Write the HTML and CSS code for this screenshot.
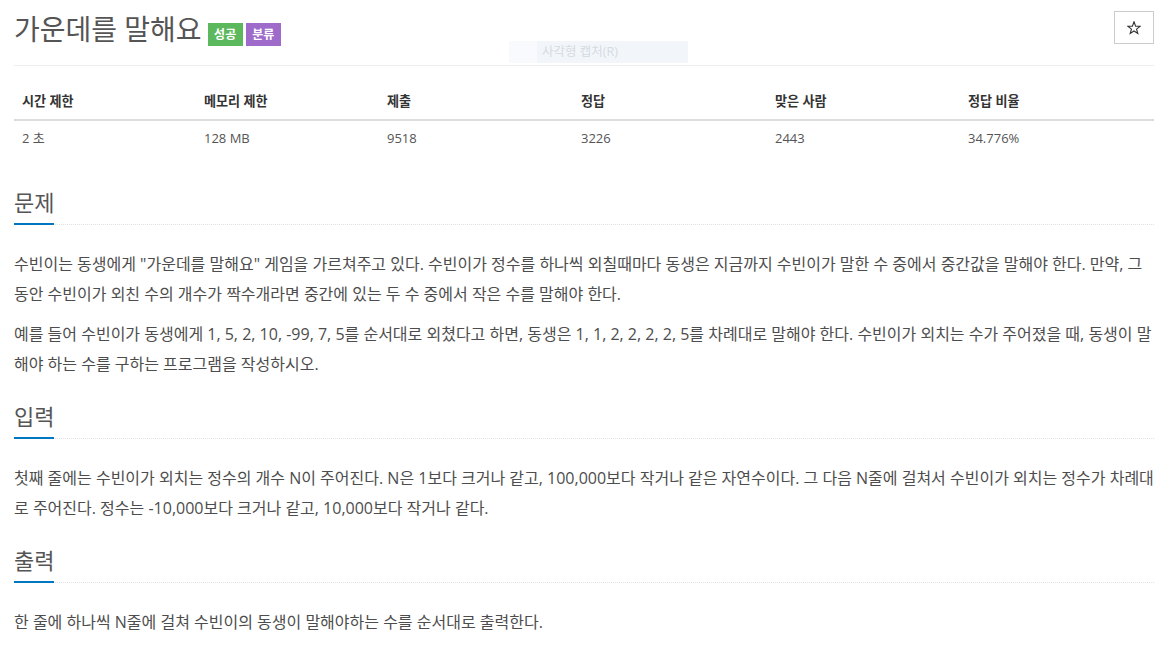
FILE: index.html
```html
<!DOCTYPE html>
<html lang="ko">
<head>
<meta charset="utf-8">
<title>가운데를 말해요</title>
<link rel="stylesheet" href="styles.css">
</head>
<body>
<div class="page">
  <header class="page-header">
    <div class="title-row">
      <h1 class="title">가운데를 말해요</h1>
      <span class="label label-success">성공</span>
      <span class="label label-purple">분류</span>
    </div>
    <button class="star-btn" type="button" aria-label="즐겨찾기">
      <svg width="14" height="14" viewBox="0 0 14 14" aria-hidden="true"><polygon points="7,0.8 8.59,5.12 13.18,5.29 9.57,8.13 10.82,12.56 7,10 3.18,12.56 4.43,8.13 0.82,5.29 5.41,5.12" fill="none" stroke="#333" stroke-width="1.1" stroke-linejoin="miter"/></svg>
    </button>
  </header>

  <table class="info">
    <colgroup>
      <col class="c1"><col class="c2"><col class="c3"><col class="c4"><col class="c5"><col class="c6">
    </colgroup>
    <thead>
      <tr><th>시간 제한</th><th>메모리 제한</th><th>제출</th><th>정답</th><th>맞은 사람</th><th>정답 비율</th></tr>
    </thead>
    <tbody>
      <tr><td>2 초</td><td>128 MB</td><td>9518</td><td>3226</td><td>2443</td><td>34.776%</td></tr>
    </tbody>
  </table>

  <section class="section section-first">
    <div class="headline"><h2>문제</h2></div>
    <div class="problem-text">
      <p>수빈이는 동생에게 "가운데를 말해요" 게임을 가르쳐주고 있다. 수빈이가 정수를 하나씩 외칠때마다 동생은 지금까지 수빈이가 말한 수 중에서 중간값을 말해야 한다. 만약, 그 동안 수빈이가 외친 수의 개수가 짝수개라면 중간에 있는 두 수 중에서 작은 수를 말해야 한다.</p>
      <p>예를 들어 수빈이가 동생에게 1, 5, 2, 10, -99, 7, 5를 순서대로 외쳤다고 하면, 동생은 1, 1, 2, 2, 2, 2, 5를 차례대로 말해야 한다. 수빈이가 외치는 수가 주어졌을 때, 동생이 말해야 하는 수를 구하는 프로그램을 작성하시오.</p>
    </div>
  </section>

  <section class="section">
    <div class="headline"><h2>입력</h2></div>
    <div class="problem-text">
      <p>첫째 줄에는 수빈이가 외치는 정수의 개수 N이 주어진다. N은 1보다 크거나 같고, 100,000보다 작거나 같은 자연수이다. 그 다음 N줄에 걸쳐서 수빈이가 외치는 정수가 차례대로 주어진다. 정수는 -10,000보다 크거나 같고, 10,000보다 작거나 같다.</p>
    </div>
  </section>

  <section class="section">
    <div class="headline"><h2>출력</h2></div>
    <div class="problem-text">
      <p>한 줄에 하나씩 N줄에 걸쳐 수빈이의 동생이 말해야하는 수를 순서대로 출력한다.</p>
    </div>
  </section>
</div>
<div class="capture-tip">사각형 캡처(R)</div>
</body>
</html>
```

FILE: styles.css
```css
html, body {
  margin: 0;
  padding: 0;
  background: #fff;
}

body {
  font-family: "Open Sans", "Noto Sans CJK KR", sans-serif;
  color: #555;
}

.page {
  width: 1140px;
  padding: 0 15px 0 14px;
}

/* header */
.page-header {
  display: flex;
  justify-content: space-between;
  align-items: flex-start;
  height: 65px;
  border-bottom: 1px solid #eee;
}

.title-row {
  display: flex;
  align-items: flex-end;
  margin-top: 11px;
}

.title {
  margin: 0;
  font-size: 28px;
  line-height: 36px;
  font-weight: 400;
  color: #555;
}

.label {
  display: inline-block;
  height: 23px;
  line-height: 23px;
  padding: 0 6.5px;
  margin-bottom: 1px;
  font-size: 12px;
  font-weight: 700;
  color: #fff;
}

.label-success {
  background: #5cb85c;
  margin-left: 6px;
}

.label-purple {
  background: #9e6bcb;
  margin-left: 3px;
}

.star-btn {
  margin-top: 11px;
  width: 40px;
  height: 33px;
  padding: 0;
  border: 1px solid #ccc;
  background: #fff;
  display: flex;
  align-items: center;
  justify-content: center;
}

/* table */
.info {
  width: 1140px;
  margin-top: 18px;
  border-collapse: collapse;
  table-layout: fixed;
}

.c1 { width: 182px; }
.c2 { width: 183px; }
.c3 { width: 194px; }
.c4 { width: 194px; }
.c5 { width: 193px; }
.c6 { width: 194px; }

.info th {
  text-align: left;
  padding: 8px;
  line-height: 19px;
  font-size: 13.1px;
  font-weight: 700;
  color: #333;
  border-bottom: 2px solid #ddd;
}

.info td {
  padding: 8px;
  line-height: 18px;
  font-size: 13px;
  color: #555;
}

/* sections */
.section {
  margin-top: 23px;
}

.section-first {
  margin-top: 33px;
}

.headline {
  display: flex;
  border-bottom: 1px dotted #dde0e4;
  margin-bottom: 24px;
}

.headline h2 {
  margin: 0 0 -1px;
  padding-bottom: 7px;
  font-size: 22px;
  line-height: 28px;
  font-weight: 400;
  color: #555;
  border-bottom: 2px solid #0076c0;
}

.problem-text p {
  margin: 0 0 10px;
  font-size: 16px;
  line-height: 30px;
  color: #4d4d4d;
}

.problem-text p:last-child {
  margin-bottom: 0;
}

/* faint screen-capture tooltip lying over the page */
.capture-tip {
  position: absolute;
  left: 509px;
  top: 41px;
  width: 146px;
  height: 22px;
  padding-left: 33px;
  line-height: 22px;
  font-size: 12.5px;
  color: #d6dae0;
  background: linear-gradient(to right, #f8fafd 0 28px, #f2f6fb 28px);
}
```
